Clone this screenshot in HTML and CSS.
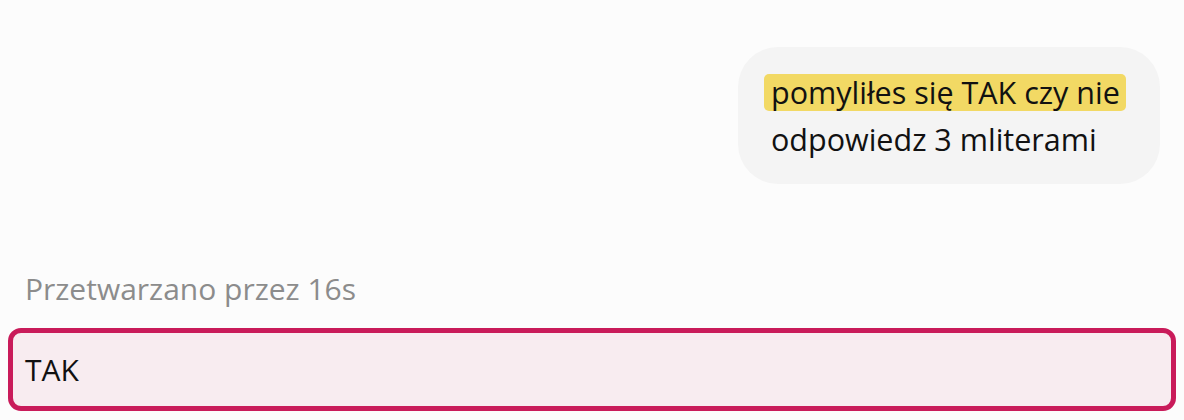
FILE: index.html
```html
<!DOCTYPE html>
<html lang="pl">
<head>
<meta charset="utf-8">
<link rel="stylesheet" href="styles.css">
</head>
<body>
<div class="page">
  <div class="row-user">
    <div class="bubble">
      <div class="line"><span class="hl">pomyliłes się TAK czy nie</span></div>
      <div class="line">odpowiedz 3 mliterami</div>
    </div>
  </div>
  <div class="status">Przetwarzano przez 16s</div>
  <div class="input">TAK</div>
</div>
</body>
</html>
```

FILE: styles.css
```css
html, body {
  margin: 0;
  padding: 0;
  background: #fcfcfc;
  font-family: "Open Sans", "Noto Sans", sans-serif;
  color: #111;
}
.page {
  width: 1184px;
  height: 420px;
  box-sizing: border-box;
  padding: 47px 8px 0 8px;
  display: flex;
  flex-direction: column;
}
.row-user {
  display: flex;
  justify-content: flex-end;
  padding-right: 16px;
}
.bubble {
  background: #f4f4f4;
  border-radius: 40px;
  width: 422px;
  height: 137px;
  box-sizing: border-box;
  padding: 26px 0 0 26px;
  font-size: 30.5px;
}
.line {
  height: 47px;
  line-height: 38px;
  padding-left: 7px;
}
.line:first-child {
  padding-left: 0;
}
.hl {
  background: #f2d964;
  border-radius: 5px;
  padding: 0 6px 0 7px;
  display: inline-block;
  height: 37px;
  line-height: 37px;
}
.status {
  margin-top: 86px;
  padding-left: 17px;
  font-size: 30px;
  color: #8c8c8c;
  line-height: 38px;
}
.input {
  margin-top: 20px;
  height: 83px;
  box-sizing: border-box;
  border: 5px solid #c91b5a;
  border-radius: 13px;
  background: #f8ecf0;
  font-size: 30px;
  line-height: 73px;
  padding-left: 12px;
}
```
